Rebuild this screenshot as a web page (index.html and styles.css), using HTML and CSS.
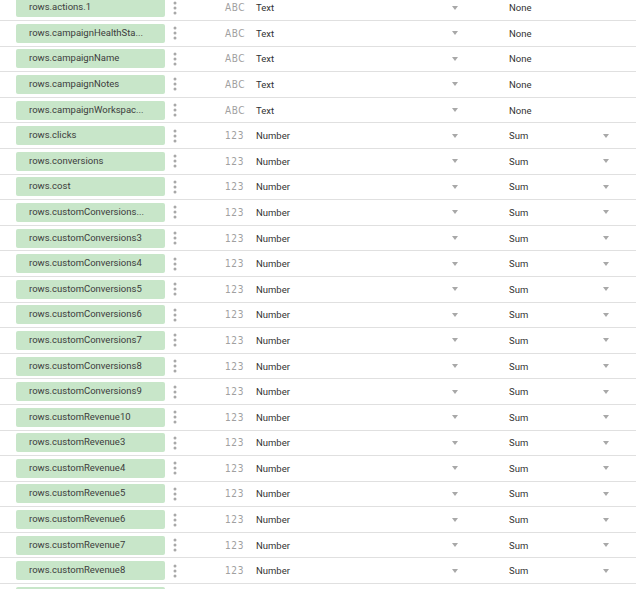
FILE: index.html
```html
<!DOCTYPE html>
<html lang="en">
<head>
    <meta charset="UTF-8">
    <title>Fields</title>
    <link rel="stylesheet" href="styles.css">
</head>
<body>
    <div class="field-list">
        <div class="field-row">
            <div class="field-chip">rows.actions.1</div>
            <div class="kebab"><svg width="4" height="14" viewBox="0 0 4 14"><circle cx="2" cy="2" r="1.5"/><circle cx="2" cy="7" r="1.5"/><circle cx="2" cy="12" r="1.5"/></svg></div>
            <div class="type-icon">ABC</div>
            <div class="type-name">Text</div>
            <div class="arrow"></div>
            <div class="agg">None</div>
            <div></div>
        </div>
        <div class="field-row">
            <div class="field-chip">rows.campaignHealthSta...</div>
            <div class="kebab"><svg width="4" height="14" viewBox="0 0 4 14"><circle cx="2" cy="2" r="1.5"/><circle cx="2" cy="7" r="1.5"/><circle cx="2" cy="12" r="1.5"/></svg></div>
            <div class="type-icon">ABC</div>
            <div class="type-name">Text</div>
            <div class="arrow"></div>
            <div class="agg">None</div>
            <div></div>
        </div>
        <div class="field-row">
            <div class="field-chip">rows.campaignName</div>
            <div class="kebab"><svg width="4" height="14" viewBox="0 0 4 14"><circle cx="2" cy="2" r="1.5"/><circle cx="2" cy="7" r="1.5"/><circle cx="2" cy="12" r="1.5"/></svg></div>
            <div class="type-icon">ABC</div>
            <div class="type-name">Text</div>
            <div class="arrow"></div>
            <div class="agg">None</div>
            <div></div>
        </div>
        <div class="field-row">
            <div class="field-chip">rows.campaignNotes</div>
            <div class="kebab"><svg width="4" height="14" viewBox="0 0 4 14"><circle cx="2" cy="2" r="1.5"/><circle cx="2" cy="7" r="1.5"/><circle cx="2" cy="12" r="1.5"/></svg></div>
            <div class="type-icon">ABC</div>
            <div class="type-name">Text</div>
            <div class="arrow"></div>
            <div class="agg">None</div>
            <div></div>
        </div>
        <div class="field-row">
            <div class="field-chip">rows.campaignWorkspac...</div>
            <div class="kebab"><svg width="4" height="14" viewBox="0 0 4 14"><circle cx="2" cy="2" r="1.5"/><circle cx="2" cy="7" r="1.5"/><circle cx="2" cy="12" r="1.5"/></svg></div>
            <div class="type-icon">ABC</div>
            <div class="type-name">Text</div>
            <div class="arrow"></div>
            <div class="agg">None</div>
            <div></div>
        </div>
        <div class="field-row">
            <div class="field-chip">rows.clicks</div>
            <div class="kebab"><svg width="4" height="14" viewBox="0 0 4 14"><circle cx="2" cy="2" r="1.5"/><circle cx="2" cy="7" r="1.5"/><circle cx="2" cy="12" r="1.5"/></svg></div>
            <div class="type-icon">123</div>
            <div class="type-name">Number</div>
            <div class="arrow"></div>
            <div class="agg">Sum</div>
            <div class="arrow"></div>
        </div>
        <div class="field-row">
            <div class="field-chip">rows.conversions</div>
            <div class="kebab"><svg width="4" height="14" viewBox="0 0 4 14"><circle cx="2" cy="2" r="1.5"/><circle cx="2" cy="7" r="1.5"/><circle cx="2" cy="12" r="1.5"/></svg></div>
            <div class="type-icon">123</div>
            <div class="type-name">Number</div>
            <div class="arrow"></div>
            <div class="agg">Sum</div>
            <div class="arrow"></div>
        </div>
        <div class="field-row">
            <div class="field-chip">rows.cost</div>
            <div class="kebab"><svg width="4" height="14" viewBox="0 0 4 14"><circle cx="2" cy="2" r="1.5"/><circle cx="2" cy="7" r="1.5"/><circle cx="2" cy="12" r="1.5"/></svg></div>
            <div class="type-icon">123</div>
            <div class="type-name">Number</div>
            <div class="arrow"></div>
            <div class="agg">Sum</div>
            <div class="arrow"></div>
        </div>
        <div class="field-row">
            <div class="field-chip">rows.customConversions...</div>
            <div class="kebab"><svg width="4" height="14" viewBox="0 0 4 14"><circle cx="2" cy="2" r="1.5"/><circle cx="2" cy="7" r="1.5"/><circle cx="2" cy="12" r="1.5"/></svg></div>
            <div class="type-icon">123</div>
            <div class="type-name">Number</div>
            <div class="arrow"></div>
            <div class="agg">Sum</div>
            <div class="arrow"></div>
        </div>
        <div class="field-row">
            <div class="field-chip">rows.customConversions3</div>
            <div class="kebab"><svg width="4" height="14" viewBox="0 0 4 14"><circle cx="2" cy="2" r="1.5"/><circle cx="2" cy="7" r="1.5"/><circle cx="2" cy="12" r="1.5"/></svg></div>
            <div class="type-icon">123</div>
            <div class="type-name">Number</div>
            <div class="arrow"></div>
            <div class="agg">Sum</div>
            <div class="arrow"></div>
        </div>
        <div class="field-row">
            <div class="field-chip">rows.customConversions4</div>
            <div class="kebab"><svg width="4" height="14" viewBox="0 0 4 14"><circle cx="2" cy="2" r="1.5"/><circle cx="2" cy="7" r="1.5"/><circle cx="2" cy="12" r="1.5"/></svg></div>
            <div class="type-icon">123</div>
            <div class="type-name">Number</div>
            <div class="arrow"></div>
            <div class="agg">Sum</div>
            <div class="arrow"></div>
        </div>
        <div class="field-row">
            <div class="field-chip">rows.customConversions5</div>
            <div class="kebab"><svg width="4" height="14" viewBox="0 0 4 14"><circle cx="2" cy="2" r="1.5"/><circle cx="2" cy="7" r="1.5"/><circle cx="2" cy="12" r="1.5"/></svg></div>
            <div class="type-icon">123</div>
            <div class="type-name">Number</div>
            <div class="arrow"></div>
            <div class="agg">Sum</div>
            <div class="arrow"></div>
        </div>
        <div class="field-row">
            <div class="field-chip">rows.customConversions6</div>
            <div class="kebab"><svg width="4" height="14" viewBox="0 0 4 14"><circle cx="2" cy="2" r="1.5"/><circle cx="2" cy="7" r="1.5"/><circle cx="2" cy="12" r="1.5"/></svg></div>
            <div class="type-icon">123</div>
            <div class="type-name">Number</div>
            <div class="arrow"></div>
            <div class="agg">Sum</div>
            <div class="arrow"></div>
        </div>
        <div class="field-row">
            <div class="field-chip">rows.customConversions7</div>
            <div class="kebab"><svg width="4" height="14" viewBox="0 0 4 14"><circle cx="2" cy="2" r="1.5"/><circle cx="2" cy="7" r="1.5"/><circle cx="2" cy="12" r="1.5"/></svg></div>
            <div class="type-icon">123</div>
            <div class="type-name">Number</div>
            <div class="arrow"></div>
            <div class="agg">Sum</div>
            <div class="arrow"></div>
        </div>
        <div class="field-row">
            <div class="field-chip">rows.customConversions8</div>
            <div class="kebab"><svg width="4" height="14" viewBox="0 0 4 14"><circle cx="2" cy="2" r="1.5"/><circle cx="2" cy="7" r="1.5"/><circle cx="2" cy="12" r="1.5"/></svg></div>
            <div class="type-icon">123</div>
            <div class="type-name">Number</div>
            <div class="arrow"></div>
            <div class="agg">Sum</div>
            <div class="arrow"></div>
        </div>
        <div class="field-row">
            <div class="field-chip">rows.customConversions9</div>
            <div class="kebab"><svg width="4" height="14" viewBox="0 0 4 14"><circle cx="2" cy="2" r="1.5"/><circle cx="2" cy="7" r="1.5"/><circle cx="2" cy="12" r="1.5"/></svg></div>
            <div class="type-icon">123</div>
            <div class="type-name">Number</div>
            <div class="arrow"></div>
            <div class="agg">Sum</div>
            <div class="arrow"></div>
        </div>
        <div class="field-row">
            <div class="field-chip">rows.customRevenue10</div>
            <div class="kebab"><svg width="4" height="14" viewBox="0 0 4 14"><circle cx="2" cy="2" r="1.5"/><circle cx="2" cy="7" r="1.5"/><circle cx="2" cy="12" r="1.5"/></svg></div>
            <div class="type-icon">123</div>
            <div class="type-name">Number</div>
            <div class="arrow"></div>
            <div class="agg">Sum</div>
            <div class="arrow"></div>
        </div>
        <div class="field-row">
            <div class="field-chip">rows.customRevenue3</div>
            <div class="kebab"><svg width="4" height="14" viewBox="0 0 4 14"><circle cx="2" cy="2" r="1.5"/><circle cx="2" cy="7" r="1.5"/><circle cx="2" cy="12" r="1.5"/></svg></div>
            <div class="type-icon">123</div>
            <div class="type-name">Number</div>
            <div class="arrow"></div>
            <div class="agg">Sum</div>
            <div class="arrow"></div>
        </div>
        <div class="field-row">
            <div class="field-chip">rows.customRevenue4</div>
            <div class="kebab"><svg width="4" height="14" viewBox="0 0 4 14"><circle cx="2" cy="2" r="1.5"/><circle cx="2" cy="7" r="1.5"/><circle cx="2" cy="12" r="1.5"/></svg></div>
            <div class="type-icon">123</div>
            <div class="type-name">Number</div>
            <div class="arrow"></div>
            <div class="agg">Sum</div>
            <div class="arrow"></div>
        </div>
        <div class="field-row">
            <div class="field-chip">rows.customRevenue5</div>
            <div class="kebab"><svg width="4" height="14" viewBox="0 0 4 14"><circle cx="2" cy="2" r="1.5"/><circle cx="2" cy="7" r="1.5"/><circle cx="2" cy="12" r="1.5"/></svg></div>
            <div class="type-icon">123</div>
            <div class="type-name">Number</div>
            <div class="arrow"></div>
            <div class="agg">Sum</div>
            <div class="arrow"></div>
        </div>
        <div class="field-row">
            <div class="field-chip">rows.customRevenue6</div>
            <div class="kebab"><svg width="4" height="14" viewBox="0 0 4 14"><circle cx="2" cy="2" r="1.5"/><circle cx="2" cy="7" r="1.5"/><circle cx="2" cy="12" r="1.5"/></svg></div>
            <div class="type-icon">123</div>
            <div class="type-name">Number</div>
            <div class="arrow"></div>
            <div class="agg">Sum</div>
            <div class="arrow"></div>
        </div>
        <div class="field-row">
            <div class="field-chip">rows.customRevenue7</div>
            <div class="kebab"><svg width="4" height="14" viewBox="0 0 4 14"><circle cx="2" cy="2" r="1.5"/><circle cx="2" cy="7" r="1.5"/><circle cx="2" cy="12" r="1.5"/></svg></div>
            <div class="type-icon">123</div>
            <div class="type-name">Number</div>
            <div class="arrow"></div>
            <div class="agg">Sum</div>
            <div class="arrow"></div>
        </div>
        <div class="field-row">
            <div class="field-chip">rows.customRevenue8</div>
            <div class="kebab"><svg width="4" height="14" viewBox="0 0 4 14"><circle cx="2" cy="2" r="1.5"/><circle cx="2" cy="7" r="1.5"/><circle cx="2" cy="12" r="1.5"/></svg></div>
            <div class="type-icon">123</div>
            <div class="type-name">Number</div>
            <div class="arrow"></div>
            <div class="agg">Sum</div>
            <div class="arrow"></div>
        </div>
        <div class="field-row">
            <div class="field-chip"></div>
        </div>
    </div>
</body>
</html>
```

FILE: styles.css
```css
html, body {
    margin: 0;
    padding: 0;
    height: 100%;
    overflow: hidden;
    background-color: white;
}
body {
    font-family: Roboto, "Liberation Sans", Arial, sans-serif;
    font-size: 9.5px;
    color: #333;
}
.field-list {
    margin-top: -4.6px;
}
.field-row {
    box-sizing: border-box;
    height: 25.6px;
    border-bottom: 1px solid #e0e0e0;
    padding-left: 16px;
    display: grid;
    grid-template-columns: 149px 60px 31px 196px 57px 94px 7px;
    align-items: center;
}
.field-chip {
    box-sizing: border-box;
    height: 19px;
    line-height: 17px;
    background-color: #c8e6c9;
    border-radius: 2px;
    padding: 0 8px 0 13px;
    color: #3c3c3c;
    white-space: nowrap;
    overflow: hidden;
    text-overflow: ellipsis;
}
.kebab {
    padding-left: 8px;
    display: flex;
    align-items: center;
}
.kebab svg {
    fill: #a8a8a8;
}
.type-icon {
    font-family: "DejaVu Sans Condensed", "DejaVu Sans", sans-serif;
    font-size: 10px;
    color: #a0a0a0;
    letter-spacing: 0.6px;
}
.type-name,
.agg {
    color: #333;
}
.arrow {
    width: 0;
    height: 0;
    border-left: 3.5px solid transparent;
    border-right: 3.5px solid transparent;
    border-top: 4px solid #a8a8a8;
}
```
